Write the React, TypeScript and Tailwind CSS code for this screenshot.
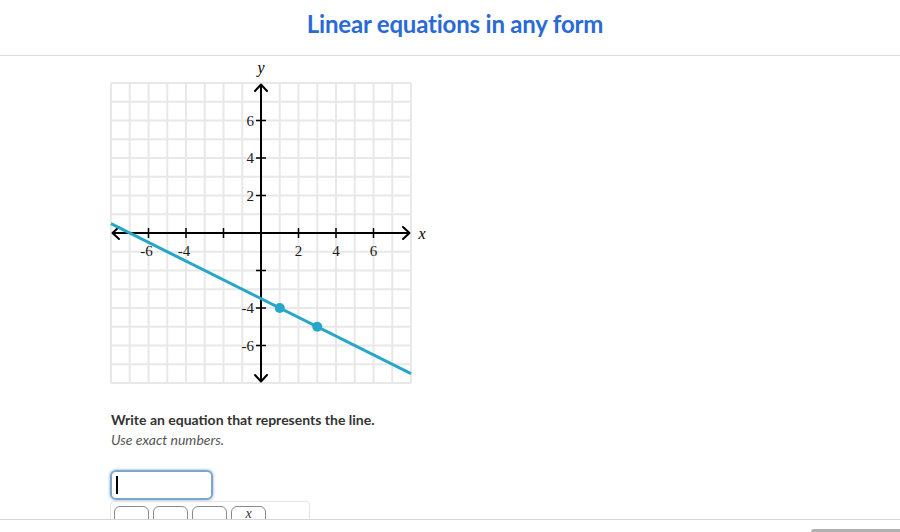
const UNIT = 18.75;
const OX = 261;
const OY = 233;
const px = (x: number) => OX + x * UNIT;
const py = (y: number) => OY - y * UNIT;

function Graph() {
  const lines = Array.from({ length: 17 }, (_, i) => i - 8);
  const ticks = [-6, -4, -2, 2, 4, 6];
  const serif = { fontFamily: '"Liberation Serif", "DejaVu Serif", serif' };
  return (
    <svg width="340" height="336" viewBox="100 56 340 336" className="block">
      {lines.map((v) => (
        <g key={v}>
          <line x1={px(v)} y1={py(8)} x2={px(v)} y2={py(-8)} stroke="#e8e8e8" strokeWidth="2" />
          <line x1={px(-8)} y1={py(v)} x2={px(8)} y2={py(v)} stroke="#e8e8e8" strokeWidth="2" />
        </g>
      ))}
      {/* axes */}
      <line x1={px(-8) + 2} y1={OY} x2={px(8) - 2} y2={OY} stroke="#000" strokeWidth="2" />
      <line x1={OX} y1={py(8) + 2} x2={OX} y2={py(-8) - 2} stroke="#000" strokeWidth="2" />
      <polyline points={`${px(-8) + 8},${OY - 6} ${px(-8) + 1.5},${OY} ${px(-8) + 8},${OY + 6}`} fill="none" stroke="#000" strokeWidth="2" strokeLinecap="round" strokeLinejoin="round" />
      <polyline points={`${px(8) - 8},${OY - 6} ${px(8) - 1.5},${OY} ${px(8) - 8},${OY + 6}`} fill="none" stroke="#000" strokeWidth="2" strokeLinecap="round" strokeLinejoin="round" />
      <polyline points={`${OX - 6},${py(8) + 8} ${OX},${py(8) + 1.5} ${OX + 6},${py(8) + 8}`} fill="none" stroke="#000" strokeWidth="2" strokeLinecap="round" strokeLinejoin="round" />
      <polyline points={`${OX - 6},${py(-8) - 8} ${OX},${py(-8) - 1.5} ${OX + 6},${py(-8) - 8}`} fill="none" stroke="#000" strokeWidth="2" strokeLinecap="round" strokeLinejoin="round" />
      {ticks.map((t) => (
        <g key={t}>
          <line x1={px(t)} y1={OY - 5} x2={px(t)} y2={OY + 5} stroke="#000" strokeWidth="1.5" />
          <line x1={OX - 5} y1={py(t)} x2={OX + 5} y2={py(t)} stroke="#000" strokeWidth="1.5" />
        </g>
      ))}
      {ticks
        .filter((t) => t !== -2)
        .map((t) => (
          <g key={`l${t}`} style={serif} fontSize="15" fill="#1a1a1a">
            <text x={px(t) - (t < 0 ? 2 : 0)} y={OY + 23} textAnchor="middle">
              {t}
            </text>
            <text x={OX - 7} y={py(t) + 5} textAnchor="end">
              {t}
            </text>
          </g>
        ))}
      <text x={OX} y={73} textAnchor="middle" fontSize="16" fontStyle="italic" style={serif}>
        y
      </text>
      <text x={422} y={239} textAnchor="middle" fontSize="16" fontStyle="italic" style={serif}>
        x
      </text>
      {/* line y = -x/2 - 7/2 */}
      <line x1={px(-8)} y1={py(0.5)} x2={px(8)} y2={py(-7.5)} stroke="#26a7c8" strokeWidth="3" />
      <circle cx={px(1)} cy={py(-4)} r="5" fill="#26a7c8" />
      <circle cx={px(3)} cy={py(-5)} r="5" fill="#26a7c8" />
    </svg>
  );
}

export default function App() {
  return (
    <div
      className="h-[532px] w-[900px] flex flex-col overflow-hidden bg-white"
      style={{ fontFamily: 'Lato, "Open Sans", sans-serif' }}
    >
      <header className="h-[56px] shrink-0 border-b border-[#dcdcdc] flex items-center justify-center pl-[10px] pb-[8px]">
        <h1 className="text-[24px] font-bold text-[#2a6ad6] tracking-[-0.2px]">Linear equations in any form</h1>
      </header>

      <main className="flex-1 overflow-hidden pl-[100px]">
        <Graph />
        <div className="pl-[11px] pt-[18px]">
          <p className="text-[14px] leading-[20px] font-bold text-[#333]">Write an equation that represents the line.</p>
          <p className="text-[14px] leading-[19px] italic text-[#555]">Use exact numbers.</p>

          <div className="mt-[21px] w-[103px] h-[30px] -ml-[1px] rounded-[6px] border-2 border-[#7ea6c9] shadow-[0_0_2px_1px_rgba(126,166,201,0.5)] flex items-center pl-[4px]">
            <div className="w-[1.5px] h-[18px] bg-black" />
          </div>

          <div className="mt-[1px] -ml-[1px] w-[200px] h-[40px] rounded-t-[4px] border border-[#e3e3e3] flex gap-[4px] pl-[3px] pt-[4px]">
            {["", "", "", "x"].map((k, i) => (
              <div
                key={i}
                className="w-[35px] h-[30px] rounded-[6px] border border-[#8a8a8a] flex justify-center text-[14px] leading-[14px] italic text-[#333]"
                style={{ fontFamily: '"Liberation Serif", serif' }}
              >
                {k}
              </div>
            ))}
          </div>
        </div>
      </main>

      <footer className="h-[13px] shrink-0 border-t border-[#d6d6d6] bg-white flex justify-end">
        <div className="mt-[9px] w-[89px] h-[4px] bg-[#b0b0b0] rounded-tl-[3px]" />
      </footer>
    </div>
  );
}
